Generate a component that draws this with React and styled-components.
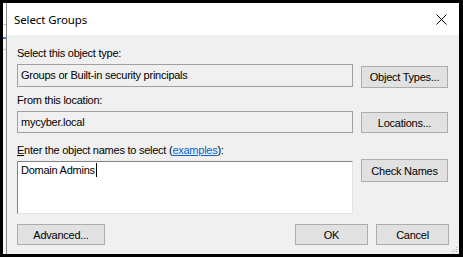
import styled, { createGlobalStyle } from 'styled-components';

const GlobalStyle = createGlobalStyle`
  html, body {
    margin: 0;
    padding: 0;
    background: #ffffff;
  }
  * {
    box-sizing: border-box;
  }
`;

const Frame = styled.div`
  width: 463px;
  height: 257px;
  border-top: 3px solid #000;
  border-left: 3px solid #000;
  border-right: 4px solid #000;
  border-bottom: 3px solid #000;
  display: flex;
  background: #ffffff;
`;

const BehindStrip = styled.div`
  width: 3px;
  flex-shrink: 0;
  background: linear-gradient(
    to bottom,
    #ffffff 0px,
    #ffffff 21px,
    #c8c8c8 21px,
    #c8c8c8 22px,
    #ffffff 22px,
    #ffffff 34px,
    #3a7bd5 34px,
    #3a7bd5 36px,
    #f5f5f5 36px,
    #f5f5f5 46px,
    #c8c8c8 46px,
    #c8c8c8 47px,
    #f5f5f5 47px
  );
`;

const Dialog = styled.div`
  flex: 1;
  display: flex;
  flex-direction: column;
  border-left: 1px solid #8a8a8a;
  background: #f0f0f0;
  font-family: "Liberation Sans", Arial, sans-serif;
  font-size: 11px;
  letter-spacing: -0.25px;
  color: #000;
`;

const TitleBar = styled.div`
  height: 32px;
  flex-shrink: 0;
  display: flex;
  align-items: center;
  justify-content: space-between;
  background: #ffffff;
  padding: 0 10px 0 7px;
`;

const Title = styled.div`
  font-family: "Noto Sans", "Open Sans", sans-serif;
  font-size: 11.5px;
  letter-spacing: -0.1px;
  color: #000;
  padding-top: 1px;
`;

const CloseIcon = styled.svg`
  width: 11px;
  height: 11px;
  margin-right: 2px;
`;

const Body = styled.div`
  flex: 1;
  display: flex;
  flex-direction: column;
  padding: 12px 10px 9px 10px;
  position: relative;
`;

const Label = styled.div`
  height: 13px;
  line-height: 13px;
  margin-top: ${(p) => p.$gap || 0}px;
  margin-bottom: 4px;
  white-space: nowrap;
`;

const AccessKey = styled.span`
  text-decoration: underline;
`;

const Link = styled.span`
  color: #0066cc;
  text-decoration: underline;
`;

const Row = styled.div`
  display: flex;
  align-items: flex-start;
  gap: 8px;
`;

const Field = styled.div`
  width: 336px;
  height: ${(p) => p.$height}px;
  border: 1px solid #a0a0a0;
  background: #f0f0f0;
  padding: 3px 3px;
  line-height: 14px;
  white-space: nowrap;
`;

const NamesBox = styled.div`
  width: 336px;
  height: 53px;
  background: #ffffff;
  border-top: 1px solid #828282;
  border-left: 1px solid #828282;
  border-right: 1px solid #e3e3e3;
  border-bottom: 1px solid #e3e3e3;
  padding: 1px 3px;
  line-height: 14px;
`;

const Caret = styled.span`
  display: inline-block;
  width: 1px;
  height: 14px;
  background: #000;
  vertical-align: top;
  margin-left: 1px;
`;

const Button = styled.div`
  width: ${(p) => p.$width || 87}px;
  height: ${(p) => p.$height || 22}px;
  margin-top: ${(p) => p.$offset || 0}px;
  flex-shrink: 0;
  display: flex;
  align-items: center;
  justify-content: center;
  background: #e1e1e1;
  border: 1px solid #adadad;
  white-space: nowrap;
`;

const Footer = styled.div`
  display: flex;
  align-items: center;
  margin-top: 10px;
`;

const Spacer = styled.div`
  flex: 1;
`;

const FooterButtons = styled.div`
  display: flex;
  gap: 8px;
`;

const Grip = styled.svg`
  position: absolute;
  right: 1px;
  bottom: 1px;
  width: 7px;
  height: 7px;
`;

export default function App() {
  return (
    <>
      <GlobalStyle />
      <Frame>
        <BehindStrip />
        <Dialog>
          <TitleBar>
            <Title>Select Groups</Title>
            <CloseIcon viewBox="0 0 11 11">
              <path d="M0.5 0.5 L10.5 10.5 M10.5 0.5 L0.5 10.5" stroke="#000" strokeWidth="1" fill="none" />
            </CloseIcon>
          </TitleBar>
          <Body>
            <Label>Select this object type:</Label>
            <Row>
              <Field $height={23}>Groups or Built-in security principals</Field>
              <Button $offset={2}>Object Types...</Button>
            </Row>

            <Label $gap={6}>From this location:</Label>
            <Row>
              <Field $height={22}>mycyber.local</Field>
              <Button $offset={1} $height={21}>Locations...</Button>
            </Row>

            <Label $gap={11}>
              <AccessKey>E</AccessKey>nter the object names to select (<Link>examples</Link>):
            </Label>
            <Row>
              <NamesBox>
                Domain Admins<Caret />
              </NamesBox>
              <Button $offset={-2} $height={23}>Check Names</Button>
            </Row>

            <Footer>
              <Button $width={88} $height={21}>Advanced...</Button>
              <Spacer />
              <FooterButtons>
                <Button $width={73} $height={21}>OK</Button>
                <Button $width={73} $height={21}>Cancel</Button>
              </FooterButtons>
            </Footer>
            <Grip viewBox="0 0 7 7">
              <rect x="5" y="1" width="1" height="1" fill="#b8b8b8" />
              <rect x="3" y="3" width="1" height="1" fill="#b8b8b8" />
              <rect x="5" y="3" width="1" height="1" fill="#b8b8b8" />
              <rect x="1" y="5" width="1" height="1" fill="#b8b8b8" />
              <rect x="3" y="5" width="1" height="1" fill="#b8b8b8" />
              <rect x="5" y="5" width="1" height="1" fill="#b8b8b8" />
            </Grip>
          </Body>
        </Dialog>
      </Frame>
    </>
  );
}
